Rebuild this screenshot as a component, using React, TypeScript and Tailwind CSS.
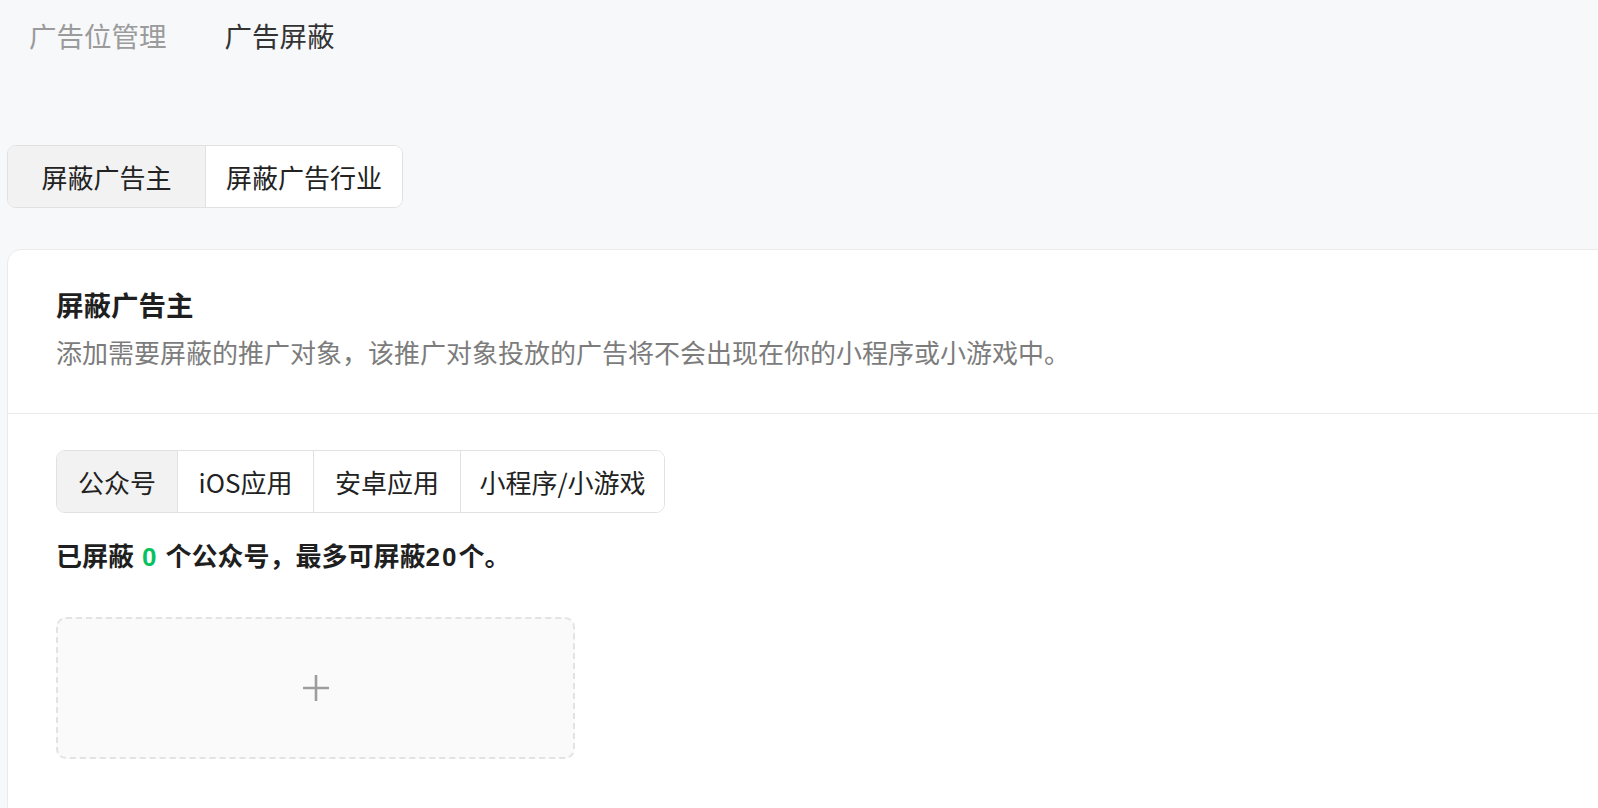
import React from 'react';

const font = "font-['PingFang_SC','Noto_Sans_CJK_SC',sans-serif]";

const blockTabs = ['屏蔽广告主', '屏蔽广告行业'];
const targetTabs = [
  { label: '公众号', w: 'w-[120px]' },
  { label: 'iOS应用', w: 'w-[136px]' },
  { label: '安卓应用', w: 'w-[147px]' },
  { label: '小程序/小游戏', w: 'w-[204px]' },
];

export default function App() {
  return (
    <div className={`${font} h-[808px] w-full overflow-hidden bg-[#f7f8fa] text-[#333]`}>
      {/* top nav */}
      <nav className="flex items-center gap-[58px] pl-[29px] pt-[15px] text-[27.5px] leading-[40px]">
        <span className="text-[#9b9b9b]">广告位管理</span>
        <span className="text-[#333]">广告屏蔽</span>
      </nav>

      {/* block type switch */}
      <div className="mt-[90px] ml-[7px] flex w-fit overflow-hidden rounded-[9px] border border-[#e1e1e1] bg-white">
        {blockTabs.map((t, i) => (
          <button
            key={t}
            className={`h-[61px] w-[197px] text-[26px] text-[#222] ${i === 0 ? 'bg-[#f2f2f2]' : 'border-l border-[#e1e1e1] bg-white'}`}
          >
            {t}
          </button>
        ))}
      </div>

      {/* card */}
      <section className="mt-[41px] ml-[7px] w-[1640px] rounded-[14px] border border-[#ebebeb] bg-white">
        <header className="border-b border-[#ebebeb] pb-[41px] pl-[48px] pt-[34px]">
          <h2 className="text-[27.5px] font-bold leading-[40px] text-[#1f1f1f]">屏蔽广告主</h2>
          <p className="mt-[8px] text-[26px] leading-[40px] text-[#7c7c7c]">
            添加需要屏蔽的推广对象，该推广对象投放的广告将不会出现在你的小程序或小游戏中。
          </p>
        </header>

        <div className="pl-[48px] pt-[36px] pb-[60px]">
          <div className="flex w-fit overflow-hidden rounded-[9px] border border-[#e1e1e1]">
            {targetTabs.map((t, i) => (
              <button
                key={t.label}
                className={`h-[61px] ${t.w} text-[26px] text-[#222] ${i === 0 ? 'bg-[#f2f2f2]' : 'border-l border-[#e1e1e1] bg-white'}`}
              >
                {t.label}
              </button>
            ))}
          </div>

          <p className="mt-[24px] font-['Liberation_Sans','Noto_Sans_CJK_SC',sans-serif] text-[26px] font-bold leading-[40px] text-[#1f1f1f]">
            已屏蔽<span className="ml-[8px] mr-[9px] text-[#07c160]">0</span>个公众号，最多可屏蔽<span className="tracking-[2px]">20</span>个。
          </p>

          <button className="mt-[40px] flex h-[142px] w-[519px] items-center justify-center rounded-[10px] border-2 border-dashed border-[#e3e3e3] bg-[#fafafa]">
            <svg width="28" height="28" viewBox="0 0 28 28" fill="none" stroke="#9d9d9d" strokeWidth="2.6">
              <path d="M14 1v26M1 14h26" />
            </svg>
          </button>
        </div>
      </section>
    </div>
  );
}
